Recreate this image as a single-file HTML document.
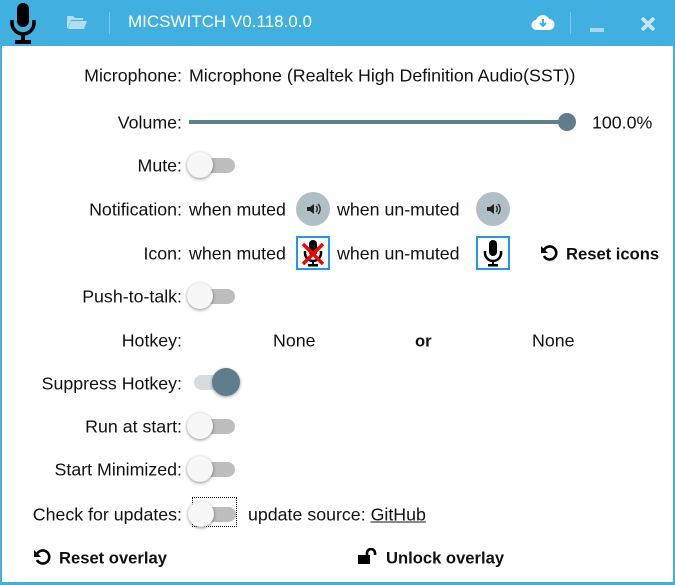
<!DOCTYPE html>
<html><head><meta charset="utf-8"><style>
*{margin:0;padding:0;box-sizing:border-box}
body{width:675px;height:584px;background:#41b0e1;font-family:"Segoe UI","Liberation Sans",sans-serif;font-size:17.8px;color:#111;position:relative;overflow:hidden}
.main{position:absolute;left:2px;top:46px;width:671px;height:536px;background:#fff}
.a{position:absolute;white-space:nowrap}
.lbl{position:absolute;right:493px;white-space:nowrap;transform:translateY(-50%)}
.t{position:absolute;transform:translateY(-50%);white-space:nowrap}
.tog{position:absolute;width:50px;height:28px}
.tog .tr{position:absolute;left:4px;top:7px;width:44px;height:15px;border-radius:8px;background:#bdbdbd}
.tog .kn{position:absolute;left:0;top:1px;width:26px;height:26px;border-radius:50%;background:#f7f7f7;box-shadow:0 1px 3px rgba(0,0,0,.45)}
.spk{position:absolute;width:34px;height:34px;border-radius:50%;background:#b0bec5;transform:translateY(-50%)}
.ib{position:absolute;width:34px;height:34px;border:2px solid #2196f3;transform:translateY(-50%);background:#fff}
b{font-weight:bold;font-size:16.6px}
.wrap{position:absolute;left:0;top:1px;width:675px;height:584px}
</style></head><body>
<svg class="a" style="left:8px;top:2px" width="30" height="44" viewBox="0 0 30 44"><rect x="9" y="1" width="12" height="24" rx="6" fill="#000"/><path d="M4 18v3a11 11 0 0 0 22 0v-3" stroke="#000" stroke-width="3.5" fill="none"/><rect x="13" y="31" width="4" height="8" fill="#000"/><rect x="7" y="38" width="16" height="4" fill="#000"/></svg>
<svg class="a" style="left:67px;top:15px" width="20" height="14" viewBox="0 0 20 14"><path d="M0 1h6l2 2h8v2H4L1 13H0z M4 6h16l-3 8H1z" fill="#b3dcef"/></svg>
<div class="a" style="left:109px;top:12px;width:1px;height:22px;background:#7cc9ea"></div>
<div class="a" style="left:128px;top:12px;color:#fff;font-size:17px">MICSWITCH V0.118.0.0</div>
<svg class="a" style="left:531px;top:13px" width="24" height="18" viewBox="0 0 24 18"><path d="M6 17a5 5 0 0 1-1-10 7 7 0 0 1 13-1 5.5 5.5 0 0 1 0 11z" fill="#fff"/><path d="M12 6v7M9 10l3 3 3-3" stroke="#41b0e1" stroke-width="2" fill="none"/></svg>
<div class="a" style="left:570px;top:12px;width:1px;height:22px;background:#7cc9ea"></div>
<div class="a" style="left:590px;top:28px;width:14px;height:4px;background:#a9d9f0"></div>
<svg class="a" style="left:640px;top:16px" width="16" height="16" viewBox="0 0 16 16"><path d="M2 2l12 12M14 2L2 14" stroke="#c9e7f5" stroke-width="3.5"/></svg>
<div class="main"></div>
<div class="wrap">
<div class="lbl" style="top:75px">Microphone:</div>
<div class="t" style="left:189px;top:75px">Microphone (Realtek High Definition Audio(SST))</div>
<div class="lbl" style="top:122px">Volume:</div>
<div class="a" style="left:189px;top:119px;width:378px;height:4px;background:#607d8b"></div>
<div class="a" style="left:558px;top:112px;width:18px;height:18px;border-radius:50%;background:#607d8b"></div>
<div class="t" style="left:592px;top:122px">100.0%</div>
<div class="lbl" style="top:165px">Mute:</div>
<div class="tog" style="left:187px;top:150px"><div class="tr"></div><div class="kn"></div></div>
<div class="lbl" style="top:209px">Notification:</div>
<div class="t" style="left:189px;top:209px">when muted</div>
<div class="spk" style="left:296px;top:208px"><svg width="34" height="34" viewBox="0 0 34 34"><path d="M11 15h3l4-3v10l-4-3h-3z" fill="#222"/><path d="M20 14a4 4 0 0 1 0 6M22 12a7 7 0 0 1 0 10" stroke="#222" stroke-width="1.3" fill="none"/></svg></div>
<div class="t" style="left:337px;top:209px">when un-muted</div>
<div class="spk" style="left:476px;top:208px"><svg width="34" height="34" viewBox="0 0 34 34"><path d="M11 15h3l4-3v10l-4-3h-3z" fill="#222"/><path d="M20 14a4 4 0 0 1 0 6M22 12a7 7 0 0 1 0 10" stroke="#222" stroke-width="1.3" fill="none"/></svg></div>
<div class="lbl" style="top:253px">Icon:</div>
<div class="t" style="left:189px;top:253px">when muted</div>
<div class="ib" style="left:296px;top:252px"><svg width="30" height="30" viewBox="0 0 30 30"><rect x="11" y="2" width="8" height="16" rx="4"/><path d="M7 13v2a8 8 0 0 0 16 0v-2" stroke="#000" stroke-width="2.5" fill="none"/><rect x="14" y="22" width="2" height="5"/><rect x="10" y="26" width="10" height="2.5"/><path d="M5 6l20 20M25 6L5 26" stroke="#f00" stroke-width="3.5"/></svg></div>
<div class="t" style="left:337px;top:253px">when un-muted</div>
<div class="ib" style="left:476px;top:252px"><svg width="30" height="30" viewBox="0 0 30 30"><rect x="11" y="2" width="8" height="16" rx="4"/><path d="M7 13v2a8 8 0 0 0 16 0v-2" stroke="#000" stroke-width="2.5" fill="none"/><rect x="14" y="22" width="2" height="5"/><rect x="10" y="26" width="10" height="2.5"/></svg></div>
<svg class="a" style="left:540px;top:243px" width="18" height="18" viewBox="0 0 18 18"><path d="M4 6a6.5 6.5 0 1 1 0 6" stroke="#000" stroke-width="2.6" fill="none"/><path d="M1 2v7h7z" fill="#000"/></svg>
<div class="t" style="left:566px;top:253px"><b>Reset icons</b></div>
<div class="lbl" style="top:296px">Push-to-talk:</div>
<div class="tog" style="left:187px;top:281px"><div class="tr"></div><div class="kn"></div></div>
<div class="lbl" style="top:340px">Hotkey:</div>
<div class="t" style="left:273px;top:340px">None</div>
<div class="t" style="left:415px;top:340px"><b>or</b></div>
<div class="t" style="left:532px;top:340px">None</div>
<div class="lbl" style="top:383px">Suppress Hotkey:</div>
<div class="a" style="left:194px;top:374px;width:44px;height:15px;border-radius:8px;background:#d5dde1"></div>
<div class="a" style="left:212px;top:367px;width:28px;height:28px;border-radius:50%;background:#607d8b;box-shadow:0 1px 3px rgba(0,0,0,.4)"></div>
<div class="lbl" style="top:426px">Run at start:</div>
<div class="tog" style="left:187px;top:411px"><div class="tr"></div><div class="kn"></div></div>
<div class="lbl" style="top:469px">Start Minimized:</div>
<div class="tog" style="left:187px;top:454px"><div class="tr"></div><div class="kn"></div></div>
<div class="lbl" style="top:514px">Check for updates:</div>
<div class="a" style="left:192px;top:496px;width:45px;height:30px;border:1px dotted #000"></div>
<div class="tog" style="left:188px;top:499px"><div class="tr"></div><div class="kn"></div></div>
<div class="t" style="left:248px;top:514px">update source: <u>GitHub</u></div>
<svg class="a" style="left:33px;top:547px" width="18" height="18" viewBox="0 0 18 18"><path d="M4 6a6.5 6.5 0 1 1 0 6" stroke="#000" stroke-width="2.6" fill="none"/><path d="M1 2v7h7z" fill="#000"/></svg>
<div class="t" style="left:59px;top:557px"><b>Reset overlay</b></div>
<svg class="a" style="left:358px;top:547px" width="22" height="16" viewBox="0 0 22 16"><rect x="0" y="7" width="12" height="9" fill="#000"/><path d="M9 8V5a4 4 0 0 1 8 0v2" stroke="#000" stroke-width="2.6" fill="none"/></svg>
<div class="t" style="left:386px;top:557px"><b>Unlock overlay</b></div>
</div>
</body></html>
